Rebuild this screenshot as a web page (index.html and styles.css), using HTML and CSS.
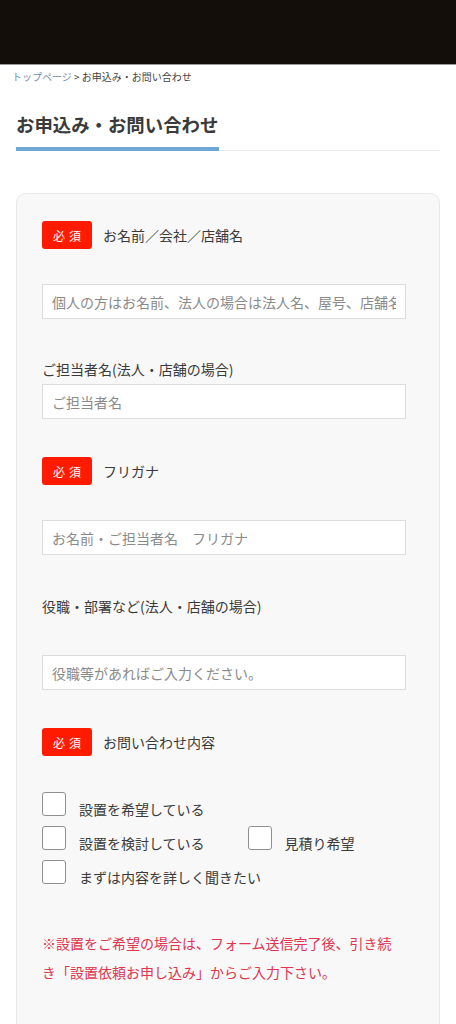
FILE: index.html
```html
<!DOCTYPE html>
<html lang="ja">
<head>
<meta charset="utf-8">
<title>お申込み・お問い合わせ</title>
<link rel="stylesheet" href="styles.css">
</head>
<body>
<header class="topbar"></header>
<nav class="breadcrumb"><a href="#" class="crumb-link">トップページ</a> &gt; お申込み・お問い合わせ</nav>
<h1 class="page-title">お申込み・お問い合わせ</h1>
<form class="card">
  <div class="field-head">
    <span class="badge">必須</span>
    <span class="field-label">お名前／会社／店舗名</span>
  </div>
  <input class="text-input gap-badge" type="text" placeholder="個人の方はお名前、法人の場合は法人名、屋号、店舗名をご入力ください。">

  <div class="plain-label">ご担当者名(法人・店舗の場合)</div>
  <input class="text-input gap-plain" type="text" placeholder="ご担当者名">

  <div class="field-head section">
    <span class="badge">必須</span>
    <span class="field-label">フリガナ</span>
  </div>
  <input class="text-input gap-badge" type="text" placeholder="お名前・ご担当者名　フリガナ">

  <div class="field-head section-plain">
    <span class="field-label flush">役職・部署など(法人・店舗の場合)</span>
  </div>
  <input class="text-input gap-badge" type="text" placeholder="役職等があればご入力ください。">

  <div class="field-head section">
    <span class="badge">必須</span>
    <span class="field-label">お問い合わせ内容</span>
  </div>

  <div class="checks">
    <div class="check-row">
      <label class="check"><span class="box"></span><span class="check-text">設置を希望している</span></label>
    </div>
    <div class="check-row wide">
      <label class="check"><span class="box"></span><span class="check-text">設置を検討している</span></label>
      <label class="check"><span class="box"></span><span class="check-text">見積り希望</span></label>
    </div>
    <div class="check-row">
      <label class="check"><span class="box"></span><span class="check-text">まずは内容を詳しく聞きたい</span></label>
    </div>
  </div>

  <p class="note">※設置をご希望の場合は、フォーム送信完了後、引き続き「設置依頼お申し込み」からご入力下さい。</p>
</form>
</body>
</html>
```

FILE: styles.css
```css
* { box-sizing: border-box; }
html, body { margin: 0; padding: 0; }
body {
  background: #fff;
  color: #333;
  font-family: "Noto Sans CJK JP", "Noto Sans", sans-serif;
  width: 456px;
  overflow: hidden;
}
.topbar {
  height: 65px;
  background: #130e0a;
  border-bottom: 1px solid #9a9a9a;
}
.breadcrumb {
  padding: 4px 0 0 12px;
  font-size: 10px;
  line-height: 15px;
  color: #444;
}
.crumb-link { color: #6d8db0; text-decoration: none; }
.page-title {
  position: relative;
  margin: 27px 16px 0;
  padding: 0 0 12px 0;
  font-size: 18.4px;
  line-height: 27px;
  font-weight: 700;
  color: #3a3a3a;
  border-bottom: 1px solid #ececec;
}
.page-title::after {
  content: "";
  position: absolute;
  left: 0;
  bottom: -1px;
  width: 203px;
  height: 4px;
  background: #6fa6d4;
}
.card {
  margin: 42px 16px 0;
  padding: 27px 33px 60px 25px;
  background: #f8f8f8;
  border: 1px solid #e8e8e8;
  border-radius: 10px;
}
.field-head {
  display: flex;
  align-items: center;
  height: 28px;
}
.section { margin-top: 38px; }
.section-plain { margin-top: 37px; }
.badge {
  width: 50px;
  height: 28px;
  border-radius: 3px;
  background: #ff1a00;
  color: #fff;
  font-size: 12px;
  letter-spacing: 4px;
  text-indent: 4px;
  display: flex;
  align-items: center;
  justify-content: center;
}
.field-label {
  margin-left: 11px;
  font-size: 14px;
  color: #3a3a3a;
}
.field-label.flush { margin-left: 0; }
.plain-label {
  margin-top: 40px;
  font-size: 14px;
  line-height: 21px;
  color: #3a3a3a;
}
.text-input {
  display: block;
  width: 364px;
  height: 35px;
  padding: 0 9px;
  border: 1px solid #dcdcdc;
  background: #fff;
  font-family: inherit;
  font-size: 14px;
  color: #333;
  outline: none;
  border-radius: 0;
}
.text-input::placeholder { color: #8a8a8a; }
.gap-badge { margin-top: 35px; }
.gap-plain { margin-top: 4px; }
.checks {
  margin-top: 36px;
  display: flex;
  flex-direction: column;
  gap: 10px;
}
.check-row { display: flex; }
.check-row.wide { gap: 43px; }
.check {
  display: flex;
  align-items: flex-start;
  height: 24px;
}
.box {
  width: 24px;
  height: 24px;
  border: 1px solid #8f8f8f;
  border-radius: 3px;
  background: #fff;
  flex: none;
}
.check-text {
  margin: 7px 0 0 13px;
  font-size: 14px;
  line-height: 20px;
  color: #3a3a3a;
}
.note {
  margin: 45px 0 0;
  padding-right: 8px;
  font-size: 14px;
  line-height: 29px;
  color: #e0344f;
}
```
